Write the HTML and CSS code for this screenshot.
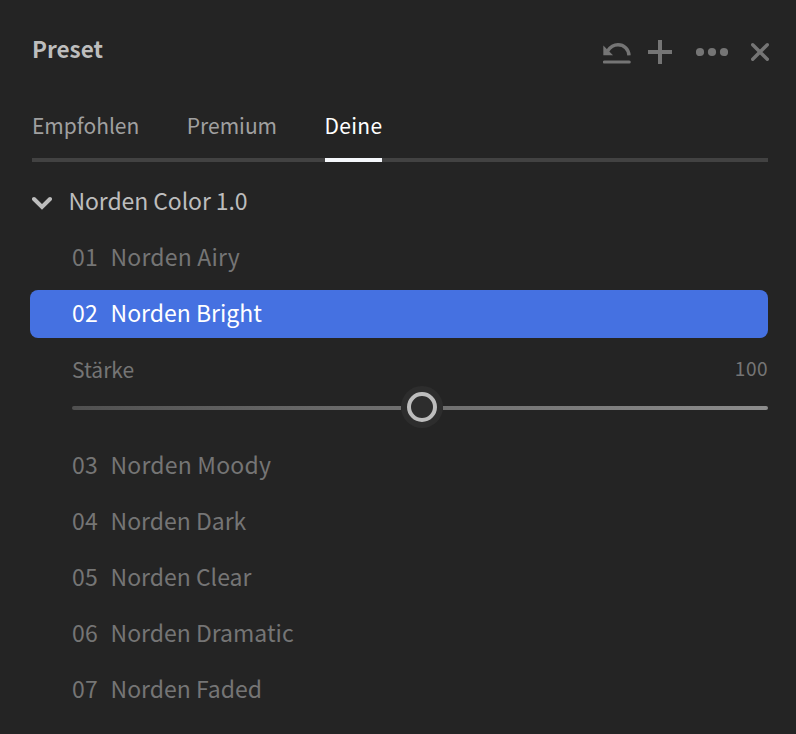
FILE: index.html
```html
<!DOCTYPE html>
<html lang="de">
<head>
    <meta charset="UTF-8">
    <meta name="viewport" content="width=device-width, initial-scale=1.0">
    <title>Preset</title>
    <link rel="stylesheet" href="styles.css">
</head>
<body>
    <div class="panel">
        <header class="panel-header">
            <h1>Preset</h1>
            <div class="actions">
                <svg class="icon icon-undo" width="28" height="24" viewBox="0 0 28 24">
                    <path d="M0.3 5.6V15.3H10Z" fill="currentColor"/>
                    <path d="M4.6 11C7.6 6.6 11 4.8 15 4.8C21 4.8 25.6 9.2 26 15.3" fill="none" stroke="currentColor" stroke-width="3.4"/>
                    <path d="M1.5 22H26.2" stroke="currentColor" stroke-width="3.2" stroke-linecap="round"/>
                </svg>
                <svg class="icon icon-add" width="24" height="24" viewBox="0 0 24 24">
                    <path d="M12 0V24M0 12H24" stroke="currentColor" stroke-width="4"/>
                </svg>
                <svg class="icon icon-more" width="32" height="24" viewBox="0 0 32 24">
                    <circle cx="4" cy="12" r="4.1" fill="currentColor"/>
                    <circle cx="16" cy="12" r="4.1" fill="currentColor"/>
                    <circle cx="28" cy="12" r="4.1" fill="currentColor"/>
                </svg>
                <svg class="icon icon-close" width="18" height="24" viewBox="0 0 18 24">
                    <path d="M1.7 4.7L16.3 19.3M16.3 4.7L1.7 19.3" stroke="currentColor" stroke-width="3.4" stroke-linecap="round"/>
                </svg>
            </div>
        </header>

        <nav class="tabs">
            <a class="tab">Empfohlen</a>
            <a class="tab">Premium</a>
            <a class="tab active">Deine</a>
        </nav>

        <div class="group">
            <svg class="chevron" width="20" height="14" viewBox="0 0 20 14">
                <path d="M2 3L10 11L18 3" fill="none" stroke="currentColor" stroke-width="4" stroke-linecap="round"/>
            </svg>
            <span>Norden Color 1.0</span>
        </div>

        <ul class="presets">
            <li class="preset"><span class="num">01</span><span class="wide">Norden Airy</span></li>
            <li class="preset selected"><span class="num">02</span><span>Norden Bright</span></li>
            <li class="strength">
                <div class="strength-label">
                    <span>Stärke</span>
                    <span class="value">100</span>
                </div>
                <div class="slider">
                    <div class="track track-left"></div>
                    <div class="handle"></div>
                    <div class="track track-right"></div>
                </div>
            </li>
            <li class="preset"><span class="num">03</span><span class="wide">Norden Moody</span></li>
            <li class="preset"><span class="num">04</span><span>Norden Dark</span></li>
            <li class="preset"><span class="num">05</span><span>Norden Clear</span></li>
            <li class="preset"><span class="num">06</span><span>Norden Dramatic</span></li>
            <li class="preset"><span class="num">07</span><span>Norden Faded</span></li>
        </ul>
    </div>
</body>
</html>
```
FILE: styles.css
```css
* {
    box-sizing: border-box;
}
body {
    margin: 0;
    background-color: #242424;
    color: #757575;
    font-family: "Noto Sans CJK SC", "Noto Sans", sans-serif;
    font-size: 23px;
}
.panel {
    height: 734px;
    padding: 28px 28px 0 30px;
    overflow: hidden;
}
.panel-header {
    display: flex;
    justify-content: space-between;
    height: 48px;
    padding-left: 2px;
}
h1 {
    margin: 0;
    color: #bdbdbd;
    font-size: 22.5px;
    font-weight: 700;
    line-height: 40px;
}
.actions {
    display: flex;
    align-items: center;
    color: #757575;
}
.icon-add {
    margin-left: 17px;
}
.icon-more {
    margin-left: 24px;
}
.icon-close {
    margin-left: 23px;
    margin-right: -1px;
}
.tabs {
    display: flex;
    gap: 47.5px;
    height: 60px;
    margin: 26px 0 0 2px;
    border-bottom: 4px solid #424242;
}
.tab {
    height: 60px;
    color: #a0a0a0;
    font-size: 21px;
    line-height: 46px;
}
.tab.active {
    color: #fff;
    border-bottom: 4px solid #f5f7fb;
    letter-spacing: 0.3px;
}
.group {
    display: flex;
    align-items: center;
    gap: 17px;
    height: 48px;
    margin-top: 16px;
    padding-left: 1.5px;
    color: #bdbdbd;
}
.chevron {
    margin-top: 1px;
}
.group span,
.preset span {
    line-height: 44px;
    padding-bottom: 4px;
}
.group span {
    letter-spacing: -0.1px;
}
.presets {
    display: flex;
    flex-direction: column;
    gap: 8px;
    margin: 8px 0 0;
    padding: 0;
    list-style: none;
}
.preset {
    display: flex;
    height: 48px;
    padding-left: 41px;
    border-radius: 8px;
}
.preset .num {
    width: 39.5px;
    padding-left: 1px;
    letter-spacing: 0.3px;
}
.preset .wide {
    letter-spacing: 0.2px;
}
.preset.selected {
    background-color: #4571e1;
    color: #fff;
}
.strength {
    height: 88px;
    padding-left: 42px;
}
.strength-label {
    display: flex;
    justify-content: space-between;
    height: 40px;
    font-size: 21px;
    line-height: 46px;
}
.value {
    font-size: 19px;
    line-height: 44px;
    letter-spacing: 0.5px;
}
.slider {
    display: flex;
    align-items: center;
    height: 44px;
    padding-bottom: 1px;
}
.track {
    height: 4px;
    margin-top: 1px;
}
.track-left {
    width: 329px;
    border-radius: 2px 0 0 2px;
    background: linear-gradient(to right, #505050, #707070);
}
.track-right {
    flex: 1;
    border-radius: 0 2px 2px 0;
    background: linear-gradient(to right, #707070, #8c8c8c);
}
.handle {
    width: 42px;
    height: 42px;
    margin-top: -1px;
    padding: 6px;
    border-radius: 50%;
    background-color: #2d2d2d;
}
.handle::before {
    content: "";
    display: block;
    box-sizing: border-box;
    width: 30px;
    height: 30px;
    border: 4px solid #bdbdbd;
    border-radius: 50%;
}
```
